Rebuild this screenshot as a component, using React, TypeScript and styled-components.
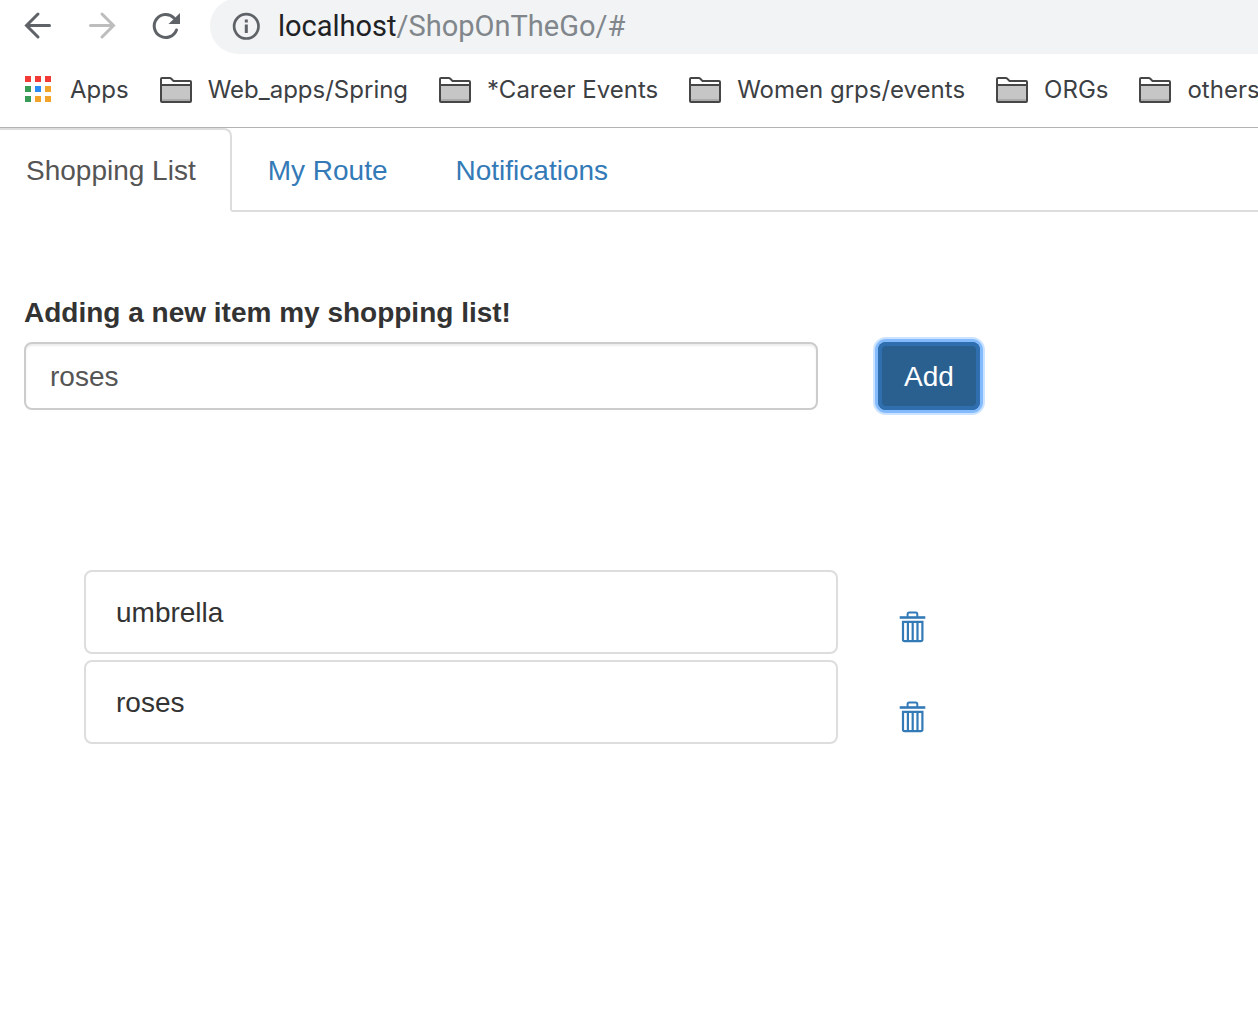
import React, { useState } from "react";
import styled, { createGlobalStyle, css } from "styled-components";

const GlobalStyle = createGlobalStyle`
  *, *::before, *::after { box-sizing: border-box; }
  html, body { margin: 0; background: #fff; overflow-x: hidden; }
  body { font: 28px/40px "Liberation Sans", Arial, sans-serif; color: #333; }
  button, input { font: inherit; }
`;

const Toolbar = styled.header`
  display: flex;
  align-items: flex-end;
  height: 54px;
  padding-left: 22px;
  overflow: hidden;
`;

const NavButtons = styled.div`
  display: flex;
  flex: none;
  gap: 32px;
  height: 56px;
  align-items: center;
  margin-right: 28px;
`;

const IconButton = styled.button`
  display: flex;
  padding: 0;
  border: 0;
  background: none;
  color: #5f6368;

  &:disabled { color: #bdbdbd; }
`;

const AddressBar = styled.div`
  display: flex;
  flex: 1;
  align-items: center;
  gap: 18px;
  height: 56px;
  padding-left: 22px;
  border-radius: 28px 0 0 28px;
  background: #f1f3f4;
  color: #80868b;
  font-family: Roboto, sans-serif;
  font-size: 29px;
  white-space: nowrap;
`;

const Host = styled.span`
  color: #202124;
`;

const Bookmarks = styled.nav`
  display: flex;
  align-items: center;
  gap: 31px;
  height: 74px;
  padding: 0 0 1px 24px;
  border-bottom: 1px solid #b3b3b3;
  overflow: hidden;
`;

const Bookmark = styled.a<{ $gap?: number }>`
  display: flex;
  flex: none;
  align-items: center;
  gap: ${(p) => p.$gap ?? 16}px;
  color: #3c4043;
  font: 24px/32px Inter, sans-serif;
  white-space: nowrap;
  text-decoration: none;
`;

const Tabs = styled.nav`
  display: flex;
  gap: 4px;
  border-bottom: 2px solid #ddd;
`;

const Tab = styled.a<{ $active?: boolean }>`
  margin-bottom: -2px;
  padding: 21px 30px 19px;
  border: 2px solid transparent;
  border-radius: 8px 8px 0 0;
  color: #337ab7;
  text-decoration: none;

  ${(p) =>
    p.$active &&
    css`
      padding-left: 26px;
      padding-right: 34px;
      border-color: #ddd;
      border-bottom-color: #fff;
      border-left: 0;
      border-top-left-radius: 0;
      background: #fff;
      color: #555;
    `}
`;

const Main = styled.main`
  padding: 81px 24px;
`;

const AddForm = styled.form`
  display: grid;
  grid-template-columns: minmax(0, 794px) auto;
  justify-content: start;
  column-gap: 60px;
  row-gap: 9px;
`;

const Label = styled.label`
  grid-column: 1 / -1;
  font-weight: 700;
`;

const TextInput = styled.input`
  width: 100%;
  height: 68px;
  padding: 14px 24px 12px;
  border: 2px solid #ccc;
  border-radius: 8px;
  box-shadow: inset 0 2px 2px rgba(0, 0, 0, 0.075);
  background: #fff;
  color: #555;
`;

const AddButton = styled.button`
  height: 68px;
  padding: 2px 26px 0;
  border: 0;
  border-radius: 8px;
  box-shadow: inset 0 0 0 4px #2f6fb0, 0 0 0 3px #83bbfd, 0 0 0 5px #cce3ff;
  background: #2a6090;
  color: #fff;
`;

const ItemList = styled.ul`
  display: flex;
  flex-direction: column;
  gap: 6px;
  margin: 160px 0 0;
  padding: 0 0 0 60px;
  list-style: none;
`;

const ItemRow = styled.li`
  display: grid;
  grid-template-columns: minmax(0, 754px) auto;
  column-gap: 61px;
  align-items: center;
`;

const ItemBox = styled.div`
  padding: 21px 30px 19px;
  border: 2px solid #ddd;
  border-radius: 8px;
`;

const DeleteButton = styled(IconButton)`
  justify-self: start;
  padding-top: 30px;
  color: #337ab7;
`;

const BackIcon = () => (
  <svg width="32" height="32" viewBox="0 0 32 32" fill="none" stroke="currentColor" strokeWidth="3">
    <path d="M27.500 15.500H5M16 4 4.500 15.500 16 27" strokeLinecap="round" />
  </svg>
);

const ForwardIcon = () => (
  <svg width="32" height="32" viewBox="0 0 32 32" fill="none" stroke="currentColor" strokeWidth="3">
    <path d="M4.500 15.500H27M16 4l11.500 11.500L16 27" strokeLinecap="round" />
  </svg>
);

const ReloadIcon = () => (
  <svg width="32" height="32" viewBox="0 0 32 32">
    <path d="M26.500 20A11.500 11.500 0 1 1 24 8" fill="none" stroke="currentColor" strokeWidth="3" strokeLinecap="round" />
    <path d="M30 3v11H18.500z" fill="currentColor" />
  </svg>
);

const InfoIcon = () => (
  <svg width="28" height="28" viewBox="0 0 28 28" fill="none" stroke="#5f6368">
    <circle cx="14.300" cy="14.300" r="12.200" strokeWidth="2.700" />
    <path d="M14.300 7.600v3M14.300 12.500v8.400" strokeWidth="3" />
  </svg>
);

const APP_COLORS = ["#f23a36", "#f23a36", "#f23a36", "#389b56", "#2a8cf2", "#f2a32a", "#389b56", "#f2a32a", "#f2a32a"];

const AppsIcon = () => (
  <svg width="28" height="28" viewBox="0 0 28 28">
    {APP_COLORS.map((fill, i) => (
      <rect key={i} x={1 + (i % 3) * 10} y={Math.floor(i / 3) * 10} width="6" height="6" fill={fill} />
    ))}
  </svg>
);

const FolderIcon = () => (
  <svg width="32" height="26" viewBox="0 1 32 26">
    <path d="M1 25V3q0-1 1-1h8q1 0 1.500 1l2 2H30q1 0 1 1v19q0 1-1 1H2q-1 0-1-1z" fill="#fff" stroke="#464646" strokeWidth="2" />
    <path d="M2 10h28v15H2z" fill="#c6c6c6" />
    <path d="M2 23h28v2H2z" fill="#ababab" />
    <path d="M1 9h30" stroke="#464646" strokeWidth="2" />
  </svg>
);

const TrashIcon = () => (
  <svg width="28" height="32" viewBox="0 0 28 32" fill="none" stroke="currentColor" strokeWidth="2">
    <path d="M.700 6.500h25.600" strokeWidth="2.600" />
    <path d="M8.600 6V3.200Q8.600 1.600 10.200 1.600h6.500Q18.300 1.600 18.300 3.200V6" />
    <path d="M4 10.800h19.400V28.500q0 1.600-1.600 1.600H5.600q-1.600 0-1.600-1.600z" strokeWidth="2.200" />
    <path d="M8.900 11v19M13.700 11v19M18.500 11v19" strokeWidth="2.200" />
  </svg>
);

const FOLDERS = ["Web_apps/Spring", "*Career Events", "Women grps/events", "ORGs", "others"];

export default function App() {
  const [items, setItems] = useState(["umbrella", "roses"]);
  const [draft, setDraft] = useState("roses");

  const addItem = (event: React.FormEvent) => {
    event.preventDefault();
    const name = draft.trim();
    if (name) setItems([...items, name]);
  };

  return (
    <>
      <GlobalStyle />
      <Toolbar>
        <NavButtons>
          <IconButton type="button" aria-label="Back"><BackIcon /></IconButton>
          <IconButton type="button" aria-label="Forward" disabled><ForwardIcon /></IconButton>
          <IconButton type="button" aria-label="Reload"><ReloadIcon /></IconButton>
        </NavButtons>
        <AddressBar>
          <InfoIcon />
          <span><Host>localhost</Host>/ShopOnTheGo/#</span>
        </AddressBar>
      </Toolbar>
      <Bookmarks aria-label="Bookmarks">
        <Bookmark href="#" $gap={18}><AppsIcon />Apps</Bookmark>
        {FOLDERS.map((name) => (
          <Bookmark href="#" key={name}><FolderIcon />{name}</Bookmark>
        ))}
      </Bookmarks>
      <Tabs aria-label="Sections">
        <Tab href="#" $active aria-current="page">Shopping List</Tab>
        <Tab href="#">My Route</Tab>
        <Tab href="#">Notifications</Tab>
      </Tabs>
      <Main>
        <AddForm onSubmit={addItem}>
          <Label htmlFor="new-item">Adding a new item my shopping list!</Label>
          <TextInput id="new-item" type="text" value={draft} onChange={(e) => setDraft(e.target.value)} />
          <AddButton type="submit">Add</AddButton>
        </AddForm>
        <ItemList>
          {items.map((name, index) => (
            <ItemRow key={index}>
              <ItemBox>{name}</ItemBox>
              <DeleteButton
                type="button"
                aria-label={`Delete ${name}`}
                onClick={() => setItems(items.filter((_, i) => i !== index))}
              >
                <TrashIcon />
              </DeleteButton>
            </ItemRow>
          ))}
        </ItemList>
      </Main>
    </>
  );
}
